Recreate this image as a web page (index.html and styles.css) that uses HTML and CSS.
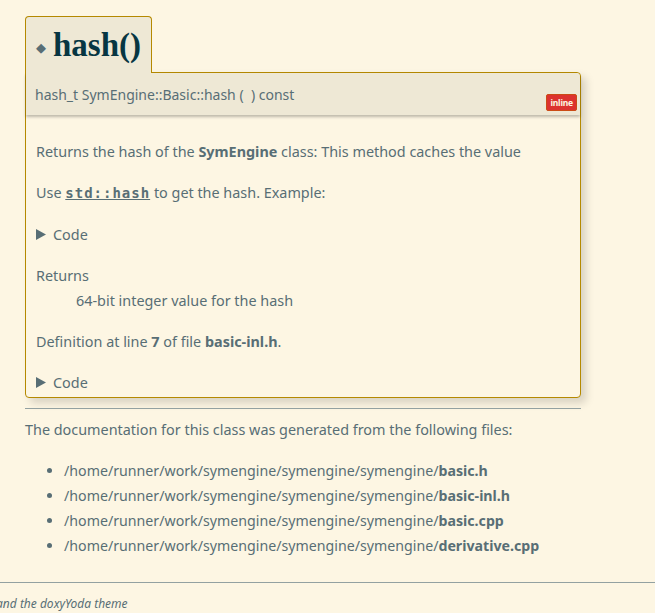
FILE: index.html
```html
<!DOCTYPE html>
<html>
<head>
<meta charset="utf-8">
<link rel="stylesheet" href="styles.css">
</head>
<body>
<div class="contents">
  <h2 class="memtitle"><span class="permalink">&#9670;</span>hash()</h2>
  <div class="memitem">
    <div class="memproto">
      <span class="protoname">hash_t SymEngine::Basic::hash (&nbsp;&nbsp;) const</span>
      <span class="mlabel">inline</span>
    </div>
    <div class="memdoc">
      <p>Returns the hash of the <b>SymEngine</b> class: This method caches the value</p>
      <p>Use <code class="link">std::hash</code> to get the hash. Example:</p>
      <p class="details"><svg class="tri" width="10" height="11" viewBox="0 0 10 11"><path d="M0 0 L10 5.5 L0 11 Z" fill="#586e75"/></svg>Code</p>
      <dl class="section">
        <dt>Returns</dt>
        <dd>64-bit integer value for the hash</dd>
      </dl>
      <p>Definition at line <b>7</b> of file <b>basic-inl.h</b>.</p>
      <p class="details"><svg class="tri" width="10" height="11" viewBox="0 0 10 11"><path d="M0 0 L10 5.5 L0 11 Z" fill="#586e75"/></svg>Code</p>
    </div>
  </div>
  <hr class="sep">
  <p class="gen">The documentation for this class was generated from the following files:</p>
  <ul class="files">
    <li>/home/runner/work/symengine/symengine/symengine/<b>basic.h</b></li>
    <li>/home/runner/work/symengine/symengine/symengine/<b>basic-inl.h</b></li>
    <li>/home/runner/work/symengine/symengine/symengine/<b>basic.cpp</b></li>
    <li>/home/runner/work/symengine/symengine/symengine/<b>derivative.cpp</b></li>
  </ul>
</div>
<footer class="footer">
  <span class="foottext">Generated by Doxygen and the doxyYoda theme</span>
</footer>
</body>
</html>
```
FILE: styles.css
```css
html, body {
  margin: 0;
  padding: 0;
  background: #fdf6e3;
}
body {
  font-family: "Noto Sans", "Open Sans", sans-serif;
  font-size: 14.4px;
  color: #586e75;
  width: 655px;
  overflow: hidden;
}
.contents {
  width: 556px;
  padding: 16px 0 0 25px;
}
.memtitle {
  display: inline-flex;
  align-items: center;
  margin: 0;
  height: 56px;
  padding: 0 10px 0 10px;
  background: #eee8d5;
  border: 1px solid #b58900;
  border-bottom: none;
  border-radius: 4px 4px 0 0;
  font-family: "Liberation Serif", "DejaVu Serif", serif;
  font-weight: bold;
  font-size: 33px;
  color: #073642;
  vertical-align: bottom;
  position: relative;
  z-index: 2;
}
.permalink {
  font-family: "DejaVu Sans", sans-serif;
  font-size: 13px;
  color: #586e75;
  margin-right: 7px;
  position: relative;
  top: 2px;
}
.memitem {
  border: 1px solid #b58900;
  border-radius: 0 4px 4px 4px;
  box-shadow: 5px 5px 8px rgba(0,0,0,0.15);
  background: #fdf6e3;
  margin-top: -1px;
}
.memproto {
  display: flex;
  justify-content: space-between;
  align-items: flex-end;
  background: #eee8d5;
  height: 42px;
  padding: 0 3px 4px 9px;
  box-shadow: 0 2px 3px rgba(0,0,0,0.25);
  border-radius: 0 4px 0 0;
  box-sizing: border-box;
}
.protoname {
  font-size: 14px;
  align-self: center;
  margin-top: 5px;
}
.mlabel {
  background: #dc322f;
  color: #fdf6e3;
  font-weight: bold;
  font-size: 8.5px;
  letter-spacing: -0.2px;
  line-height: 15px;
  padding: 0 3px;
  border-radius: 2px;
  border: 1px solid #cb4b16;
}
.memdoc {
  padding: 26px 10px 4px 10px;
}
.memdoc p, .section {
  margin: 0 0 20px 0;
  line-height: 21px;
}
.memdoc p:last-child {
  margin-bottom: 0;
}
.link {
  font-family: "DejaVu Sans Mono", monospace;
  font-weight: bold;
  font-size: 14px;
  text-decoration: underline;
  letter-spacing: 1px;
}
b { color: #586e75; }
.details {
  display: flex;
  align-items: center;
}
.tri {
  margin-right: 7px;
  display: block;
}
.section dt { margin: 0; }
.section dd { margin: 4px 0 0 40px; }
.sep {
  margin: 10px 0 0 0;
  border: none;
  border-top: 1px solid #93a1a1;
  height: 0;
}
.gen {
  margin: 11px 0 0 0;
  line-height: 20px;
}
.files {
  margin: 18px 0 0 0;
  padding-left: 39px;
  line-height: 25px;
  font-size: 14.2px;
}
.footer {
  margin-top: 24px;
  border-top: 1px solid #93a1a1;
  padding-top: 12px;
  font-size: 12px;
  font-style: italic;
  white-space: nowrap;
}
.foottext {
  display: inline-block;
  margin-left: -127px;
}
```
